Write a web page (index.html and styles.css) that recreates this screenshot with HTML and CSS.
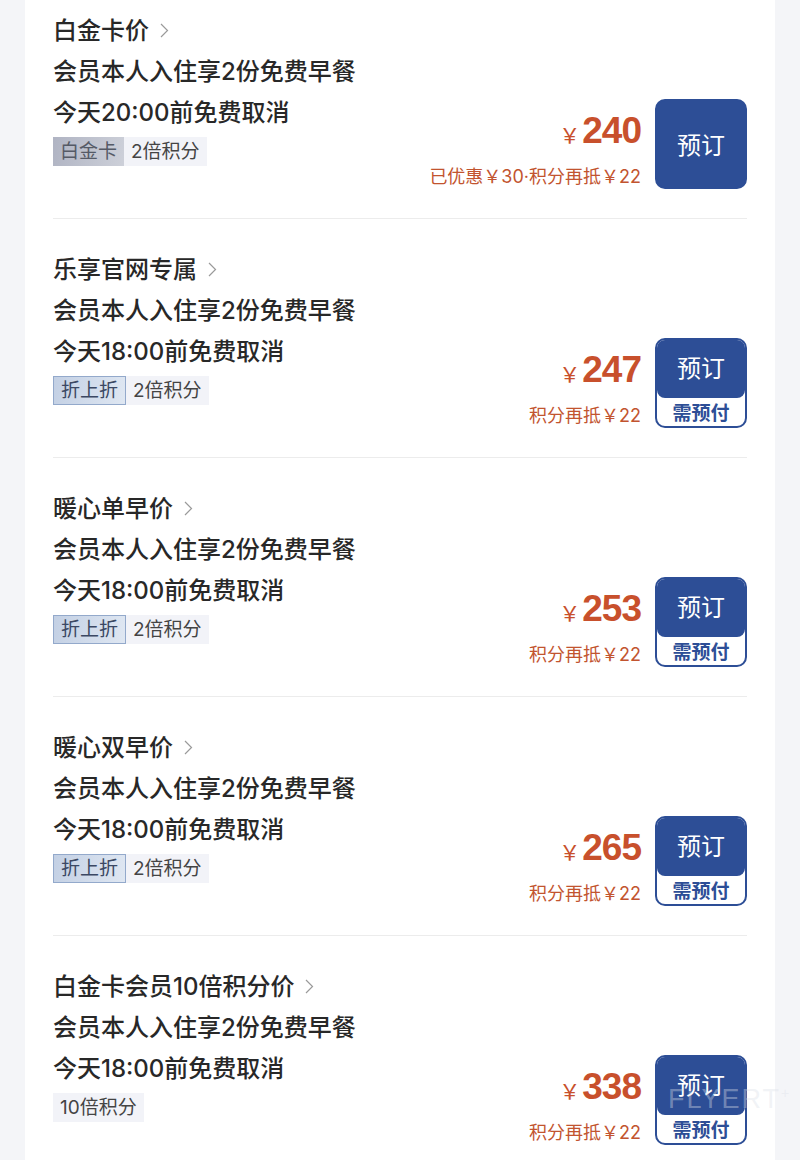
FILE: index.html
```html
<!DOCTYPE html>
<html lang="zh-CN">
<head>
    <meta charset="UTF-8">
    <meta name="viewport" content="width=device-width, initial-scale=1.0">
    <title>房型价格</title>
    <link rel="stylesheet" href="styles.css">
</head>
<body>
    <div class="list">
        <div class="room">
            <div class="info">
                <div class="name">白金卡价 <svg class="arrow" viewBox="0 0 9 15"><polyline points="1,1 7.5,7.5 1,14"/></svg></div>
                <div class="line">会员本人入住享2份免费早餐</div>
                <div class="line">今天20:00前免费取消</div>
                <div class="tags"><span class="tag tag-plat">白金卡</span><span class="tag tag-plain">2倍积分</span></div>
            </div>
            <div class="buy">
                <div class="price">
                    <div class="amount"><span class="yen">￥</span>240</div>
                    <div class="note">已优惠￥30·积分再抵￥22</div>
                </div>
                <button class="book">预订</button>
            </div>
        </div>

        <div class="room">
            <div class="info">
                <div class="name">乐享官网专属 <svg class="arrow" viewBox="0 0 9 15"><polyline points="1,1 7.5,7.5 1,14"/></svg></div>
                <div class="line">会员本人入住享2份免费早餐</div>
                <div class="line">今天18:00前免费取消</div>
                <div class="tags"><span class="tag tag-off">折上折</span><span class="tag tag-plain">2倍积分</span></div>
            </div>
            <div class="buy">
                <div class="price">
                    <div class="amount"><span class="yen">￥</span>247</div>
                    <div class="note">积分再抵￥22</div>
                </div>
                <button class="book book-prepay"><span class="book-top">预订</span><span class="book-bottom">需预付</span></button>
            </div>
        </div>

        <div class="room">
            <div class="info">
                <div class="name">暖心单早价 <svg class="arrow" viewBox="0 0 9 15"><polyline points="1,1 7.5,7.5 1,14"/></svg></div>
                <div class="line">会员本人入住享2份免费早餐</div>
                <div class="line">今天18:00前免费取消</div>
                <div class="tags"><span class="tag tag-off">折上折</span><span class="tag tag-plain">2倍积分</span></div>
            </div>
            <div class="buy">
                <div class="price">
                    <div class="amount"><span class="yen">￥</span>253</div>
                    <div class="note">积分再抵￥22</div>
                </div>
                <button class="book book-prepay"><span class="book-top">预订</span><span class="book-bottom">需预付</span></button>
            </div>
        </div>

        <div class="room">
            <div class="info">
                <div class="name">暖心双早价 <svg class="arrow" viewBox="0 0 9 15"><polyline points="1,1 7.5,7.5 1,14"/></svg></div>
                <div class="line">会员本人入住享2份免费早餐</div>
                <div class="line">今天18:00前免费取消</div>
                <div class="tags"><span class="tag tag-off">折上折</span><span class="tag tag-plain">2倍积分</span></div>
            </div>
            <div class="buy">
                <div class="price">
                    <div class="amount"><span class="yen">￥</span>265</div>
                    <div class="note">积分再抵￥22</div>
                </div>
                <button class="book book-prepay"><span class="book-top">预订</span><span class="book-bottom">需预付</span></button>
            </div>
        </div>

        <div class="room">
            <div class="info">
                <div class="name">白金卡会员10倍积分价 <svg class="arrow" viewBox="0 0 9 15"><polyline points="1,1 7.5,7.5 1,14"/></svg></div>
                <div class="line">会员本人入住享2份免费早餐</div>
                <div class="line">今天18:00前免费取消</div>
                <div class="tags"><span class="tag tag-plain">10倍积分</span></div>
            </div>
            <div class="buy">
                <div class="price">
                    <div class="amount"><span class="yen">￥</span>338</div>
                    <div class="note">积分再抵￥22</div>
                </div>
                <button class="book book-prepay"><span class="book-top">预订</span><span class="book-bottom">需预付</span></button>
            </div>
        </div>
    </div>

    <div class="watermark">FLYERT<sup>+</sup></div>
</body>
</html>
```

FILE: styles.css
```css
body {
    margin: 0;
    background: #f4f5f8;
    font-family: Inter, "Noto Sans CJK SC", sans-serif;
    color: #222222;
    height: 1160px;
    overflow: hidden;
    position: relative;
}

.list {
    margin: 0 25px;
    padding: 0 28px;
    background: #ffffff;
    min-height: 1160px;
}

.room {
    display: flex;
    justify-content: space-between;
    padding: 30px 0 29px;
    border-bottom: 1px solid #ececec;
}

.room:first-child {
    padding-top: 10px;
}

.name, .line {
    font-size: 24px;
    line-height: 41px;
    font-weight: 500;
    color: #282828;
}

.name {
    display: flex;
    align-items: center;
}

.arrow {
    width: 9px;
    height: 15px;
    margin-left: 11px;
    fill: none;
    stroke: #9a9a9a;
    stroke-width: 1.2;
}

.tags {
    display: flex;
    margin: 4px 0 23px;
}

.tag {
    font-size: 19px;
    height: 29px;
    line-height: 29px;
    box-sizing: border-box;
    padding: 0 7px;
}

.tag-plat {
    background: linear-gradient(100deg, #b0b4c3, #cdd0d9);
    color: #555a66;
}

.tag-off {
    background: linear-gradient(100deg, #c3d0e4, #dfe7f2);
    border: 1px solid #93a9cb;
    color: #3b4863;
    line-height: 27px;
}

.tag-plain {
    background: #f2f3f8;
    color: #444444;
    padding: 0 7px;
}

.buy {
    display: flex;
    align-items: flex-end;
    align-self: flex-end;
    gap: 14px;
}

.price {
    text-align: right;
    color: #c8502c;
}

.amount {
    font-family: "Liberation Sans", Arial, sans-serif;
    font-size: 37px;
    font-weight: bold;
    letter-spacing: -1px;
    line-height: 44px;
}

.yen {
    font-family: "Noto Sans CJK SC", sans-serif;
    font-size: 21px;
    font-weight: normal;
    margin-right: 3px;
}

.note {
    font-size: 18px;
    line-height: 24px;
    margin-top: 9px;
    color: #c2542f;
}

.book {
    width: 92px;
    height: 90px;
    padding: 0 0 2px;
    border: 2px solid #2d4e96;
    border-radius: 10px;
    background: #2d4e96;
    color: #ffffff;
    font-family: "Noto Sans CJK SC", sans-serif;
    font-size: 24px;
    overflow: hidden;
}

.book-prepay {
    display: flex;
    flex-direction: column;
    background: #ffffff;
    padding: 0;
}

.book-top {
    height: 58px;
    line-height: 54px;
    background: #2d4e96;
    color: #ffffff;
    border-radius: 0 0 8px 8px;
}

.book-bottom {
    flex: 1;
    line-height: 28px;
    font-size: 19px;
    font-weight: bold;
    color: #2d4e96;
}

.watermark {
    position: absolute;
    left: 668px;
    top: 1084px;
    font-family: "Liberation Sans", Arial, sans-serif;
    font-size: 27px;
    letter-spacing: 2px;
    color: rgba(220, 224, 232, 0.4);
}

.watermark sup {
    font-size: 14px;
}
```
